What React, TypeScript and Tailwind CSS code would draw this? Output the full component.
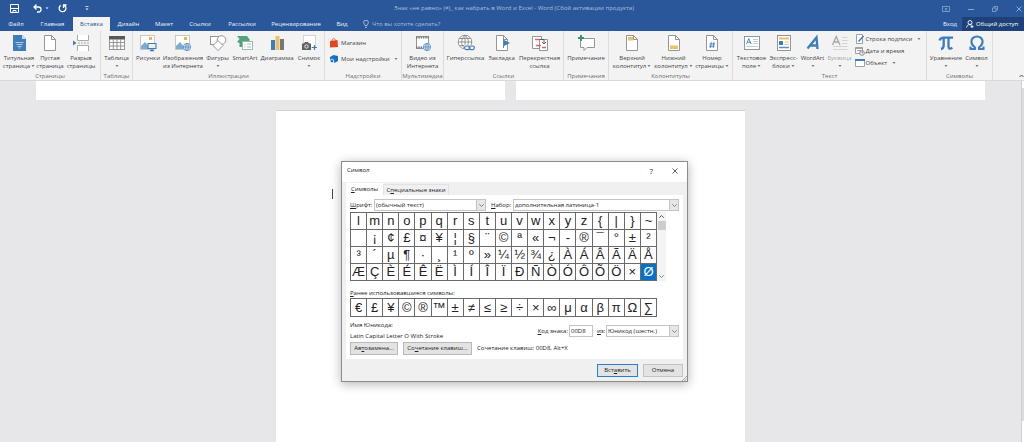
import React from "react";

const fontUi = "font-['Open_Sans','Noto_Sans',sans-serif]";

const tabs = [
  { label: "Файл", width: "w-[32px]" },
  { label: "Главная", width: "w-[41px]" },
  { label: "Вставка", width: "w-[37px]", active: true },
  { label: "Дизайн", width: "w-[37px]" },
  { label: "Макет", width: "w-[34px]" },
  { label: "Ссылки", width: "w-[38px]" },
  { label: "Рассылки", width: "w-[46px]" },
  { label: "Рецензирование", width: "w-[62px]" },
  { label: "Вид", width: "w-[30px]" },
];

const symbolRows = [
  ["l", "m", "n", "o", "p", "q", "r", "s", "t", "u", "v", "w", "x", "y", "z", "{", "|", "}", "~"],
  ["", "¡", "¢", "£", "¤", "¥", "¦", "§", "¨", "©", "ª", "«", "¬", "-", "®", "¯", "°", "±", "²"],
  ["³", "´", "µ", "¶", "·", "¸", "¹", "º", "»", "¼", "½", "¾", "¿", "À", "Á", "Â", "Ã", "Ä", "Å"],
  ["Æ", "Ç", "È", "É", "Ê", "Ë", "Ì", "Í", "Î", "Ï", "Ð", "Ñ", "Ò", "Ó", "Ô", "Õ", "Ö", "×", "Ø"],
];

const recentSymbols = ["€", "£", "¥", "©", "®", "™", "±", "≠", "≤", "≥", "÷", "×", "∞", "μ", "α", "β", "π", "Ω", "∑"];

function Icon({ children, small }: { children: React.ReactNode; small?: boolean }) {
  return (
    <svg
      className={small ? "size-[10px] shrink-0" : "size-[18px] shrink-0"}
      viewBox={small ? "0 0 10 10" : "0 0 18 18"}
      fill="none"
      stroke="#8a8a8a"
      strokeWidth={small ? 0.8 : 0.9}
      aria-hidden="true"
    >
      {children}
    </svg>
  );
}

const globe = (
  <g stroke="#5b8fc4" strokeWidth="0.8">
    <circle cx="13" cy="13" r="3.7" fill="#e9f1f9" />
    <path d="M9.3 13h7.4M13 9.3v7.4M13 9.3c-2.4 2-2.4 5.4 0 7.4M13 9.3c2.4 2 2.4 5.4 0 7.4" />
  </g>
);

const pageShape = <path d="M3.500 1.500H10.500L14.500 5.500V16.500H3.500ZM10.500 1.500V5.500H14.500" fill="#fff" />;

const photo = (
  <>
    <rect x="1.500" y="1.500" width="14" height="14" fill="#fff" stroke="#c2c2c2" />
    <rect x="10" y="3" width="3" height="3" fill="#efb54b" stroke="none" />
    <path d="M2 15v-3l4-4 6 7z" fill="#7fabd0" stroke="none" />
  </>
);

const icons = {
  cover: (
    <Icon>
      <path d="M3 1h9l4 4v12H3z" fill="#3f7db8" stroke="none" />
      <path d="M12 1v4h4z" fill="#c9dced" stroke="none" />
      <path d="M5.500 8.500h8M6.500 10.500h6M7.500 12.500h4M8.700 14h1.600" stroke="#b8d2ea" />
    </Icon>
  ),
  blank: <Icon>{pageShape}</Icon>,
  pageBreak: (
    <Icon>
      <path d="M5.500 1v5.500h11V1M5.500 17v-5.500h11V17" fill="#fff" stroke="#a0a0a0" />
      <path d="M6 9h12" strokeDasharray="2 1" stroke="#a0a0a0" />
      <path d="M1 6.500 4.500 9 1 11.500z" fill="#3f7db8" stroke="none" />
    </Icon>
  ),
  table: (
    <Icon>
      <rect x="1.500" y="2.500" width="15" height="13" fill="#fff" />
      <rect x="1" y="2" width="16" height="3.500" fill="#595959" stroke="none" />
      <path d="M1.500 8.500h15M1.500 12h15M5.300 5v10.500M9 5v10.500M12.700 5v10.500" />
    </Icon>
  ),
  picture: (
    <Icon>
      {photo}
      <path d="M9 9.500h8v5H9zM13 14.500v2M11 16.600h4" fill="#e9f1f9" stroke="#3f7db8" strokeWidth="1.100" />
    </Icon>
  ),
  onlinePicture: (
    <Icon>
      {photo}
      {globe}
    </Icon>
  ),
  shapes: (
    <Icon>
      <rect x="1.500" y="2.500" width="8" height="8" fill="#fff" />
      <circle cx="12.500" cy="6" r="4.300" fill="#fff" />
      <path d="M9 6.500 14 11.500 9 16.500 4 11.500z" fill="#fff" />
    </Icon>
  ),
  smartArt: (
    <Icon>
      <path d="M1 2h10l3 4-3 3H6v4H3.500V9L1 8l2.500-3z" fill="#54a27b" stroke="none" />
      <rect x="6.500" y="7.500" width="10" height="8" fill="#fff" stroke="#8fb7a3" />
      <path d="M8.500 10h1M11 10h4M8.500 13h1M11 13h4" stroke="#8fb7a3" />
    </Icon>
  ),
  chart: (
    <Icon>
      <path d="M3 6h4v10H3z" fill="#3f7db8" stroke="none" />
      <path d="M7.500 2h4v14h-4z" fill="#eac16b" stroke="none" />
      <path d="M12 5h4v11h-4z" fill="#777" stroke="none" />
    </Icon>
  ),
  screenshot: (
    <Icon>
      <rect x="3.500" y="1.500" width="12" height="12" fill="#fff" stroke="#d0d0d0" />
      <path d="M2 9.500h2l1-1.500h3l1 1.500h2V16H2z" fill="#606060" stroke="none" />
      <circle cx="6.500" cy="12.500" r="1.700" fill="#606060" stroke="#fff" />
      <path d="M14.500 11v5M12 13.500h5" stroke="#3f7db8" strokeWidth="1.200" />
    </Icon>
  ),
  video: (
    <Icon>
      <rect x="2.500" y="2.500" width="12" height="12" fill="#fff" />
      <path d="M2 3.500h13M2 13.500h10" stroke="#777" strokeWidth="2" strokeDasharray="1.500 0.800" />
      {globe}
    </Icon>
  ),
  hyperlink: (
    <Icon>
      <circle cx="8" cy="8" r="6.800" fill="#fff" />
      <path d="M1.200 8h13.600M2.500 4.500h11M2.500 11.500h11M8 1.200v13.600M8 1.200c-4.500 4-4.500 9.600 0 13.600M8 1.200c4.500 4 4.500 9.600 0 13.600" />
      <path d="M7 11h11v6H7z" fill="#f3f3f4" stroke="none" />
      <g stroke="#3f7db8" strokeWidth="1.200">
        <rect x="7.600" y="12" width="5.400" height="3.600" rx="1.800" />
        <rect x="12" y="12" width="5.400" height="3.600" rx="1.800" />
      </g>
    </Icon>
  ),
  bookmark: (
    <Icon>
      {pageShape}
      <path d="M10.500 5v9" stroke="#3f7db8" />
      <path d="M11 6l6 3-6 3z" fill="#3f7db8" stroke="none" />
    </Icon>
  ),
  crossRef: (
    <Icon>
      <path d="M1.500 2.500h9v12h-9z" fill="#fff" />
      <path d="M8.500 5.500h8v11h-8z" fill="#fff" />
      <path d="M4 5.500h5M5 11.500h5M11 13.500h4" stroke="#cf6a68" strokeWidth="1.500" />
      <path d="M9 5.500h4v4M11 8l2 2 2-2" stroke="#555" />
    </Icon>
  ),
  comment: (
    <Icon>
      <path d="M3.500 4.500h14v9H10L7 16.500v-3H3.500z" fill="#fff" />
      <path d="M4 1v6M1 4h6" stroke="#3f9270" strokeWidth="2" />
    </Icon>
  ),
  header: (
    <Icon>
      {pageShape}
      <path d="M5 3h5v3.500H5z" fill="#eac16b" stroke="none" />
    </Icon>
  ),
  footer: (
    <Icon>
      {pageShape}
      <path d="M5 11.500h8V15H5z" fill="#eac16b" stroke="none" />
    </Icon>
  ),
  pageNumber: (
    <Icon>
      {pageShape}
      <path d="M8.300 8 7.500 14M11 8l-.8 6M6.500 10h5.500M6 12.200h5.500" stroke="#3f7db8" />
    </Icon>
  ),
  textBox: (
    <Icon>
      <rect x="1.500" y="2.500" width="15" height="13" fill="#fff" />
      <path d="M3.500 10 5.800 4.500 8 10M4.300 8.300h3" stroke="#3f7db8" />
      <path d="M10 5.500h5M10 7.500h5M10 9.500h5M3.500 12.500h11.500" stroke="#b9c6d2" />
    </Icon>
  ),
  quickParts: (
    <Icon>
      <rect x="2.500" y="1.500" width="13" height="15" fill="#fff" />
      <path d="M4 4.500h10" stroke="#eac16b" strokeWidth="2" />
      <path d="M4 7h4v4H4z" fill="#3f7db8" stroke="none" />
      <path d="M9.500 8h4.500M9.500 10.500h4.500" stroke="#eac16b" />
      <path d="M4 13.500h10" stroke="#5b8fc4" strokeWidth="1.500" />
    </Icon>
  ),
  wordArt: (
    <Icon>
      <path d="M3.500 14.500 12.500 3.500 13.500 15M6.500 11.500h7" stroke="#3f7db8" strokeWidth="2.300" />
    </Icon>
  ),
  dropCap: (
    <Icon>
      <path d="M1.500 11 5.200 2.500 9 11M2.800 8h5" stroke="#a6a6a6" strokeWidth="1.300" />
      <path d="M11 3.500h5.500M11 6.500h5.500M11 9.500h5.500M2 12.500h14.500M2 15.500h14.500" stroke="#cfcfcf" />
    </Icon>
  ),
  equation: (
    <Icon>
      <path d="M2.500 6.500C3.500 3.500 5 3.700 7 3.700h9M6.700 4v7c0 3-1.200 3.800-2.700 4M11.500 4v8.500c0 2.300 2 2.700 3.800 1.200" stroke="#3f7db8" strokeWidth="2.300" />
    </Icon>
  ),
  omega: (
    <Icon>
      <path d="M2.500 12.500v2.500h4.500v-1.500C4 11.500 3.400 9.500 3.400 7.600 3.400 4.500 6 2.500 9 2.500s5.600 2 5.600 5.100c0 1.900-.6 3.900-3.600 5.900V15h4.500v-2.500" stroke="#3f7db8" strokeWidth="2.100" />
    </Icon>
  ),
};

function Caret({ className = "" }: { className?: string }) {
  return (
    <svg className={"inline-block h-[2px] w-[4px] shrink-0 " + className} viewBox="0 0 4 2" aria-hidden="true">
      <path d="M.5 0h3L2 2z" fill="#777" />
    </svg>
  );
}

type RibbonButtonProps = {
  icon: React.ReactNode;
  lines: string[];
  width: string;
  menu?: boolean;
  disabled?: boolean;
};

function RibbonButton({ icon, lines, width, menu, disabled }: RibbonButtonProps) {
  return (
    <button
      disabled={disabled}
      className={"flex shrink-0 flex-col items-center whitespace-nowrap leading-[8px] " + width + (disabled ? " text-[#a8a8a8]" : "")}
    >
      {icon}
      <span className="mt-[2px]">{lines[0]}</span>
      {lines[1] ? (
        <span className="flex items-center gap-px">
          {lines[1]}
          {menu && <Caret />}
        </span>
      ) : (
        menu && <Caret className="mt-[3px]" />
      )}
    </button>
  );
}

function Group({ title, width, children }: { title: string; width: string; children?: React.ReactNode }) {
  return (
    <section className={"flex shrink-0 flex-col border-r border-[#dcdcde] pt-[3px] " + width}>
      <div className="flex h-[38px] justify-center">{children}</div>
      <h2 className="text-center leading-[8px] text-[#6d6d6d]">{title}</h2>
    </section>
  );
}

function TitleBar() {
  return (
    <div className="flex h-[17px] items-center text-white">
      <div className="flex w-[130px] items-center pl-[10px]">
        <button aria-label="Сохранить">
          <svg className="size-[9px]" viewBox="0 0 9 9" fill="none" stroke="#fff">
            <path d="M.5.5h8v8h-8zM1 4.500h7M3 8.500v-2h3v2" />
          </svg>
        </button>
        <button aria-label="Отменить" className="ml-[14px]">
          <svg className="h-[9px] w-[16px]" viewBox="0 0 16 9" fill="none" stroke="#fff" strokeWidth="1.300">
            <path d="M3.500.5 1 3l2.500 2.500M1 3h4.500a2.500 2.500 0 0 1 0 5H4" />
            <path d="M12.500 3.500h3L14 5z" fill="#fff" stroke="none" />
          </svg>
        </button>
        <button aria-label="Повторить" className="ml-[9px]">
          <svg className="size-[9px]" viewBox="0 0 9 9" fill="none" stroke="#fff" strokeWidth="1.300">
            <path d="M6 1.200a3.400 3.400 0 1 1-3.300.2M5.500 4V1h3" />
          </svg>
        </button>
        <button aria-label="Настройка панели" className="ml-[18px]">
          <svg className="h-[5px] w-[4px]" viewBox="0 0 4 5" fill="#fff">
            <path d="M.5 0h3v.8h-3zM.5 2.500h3L2 4z" />
          </svg>
        </button>
      </div>
      <h1 className="flex-1 pr-[36px] text-center text-[6px] text-[#a9bfde]">
        Знак «не равно» (≠)_ как набрать в Word и Excel - Word (Сбой активации продукта)
      </h1>
      <div className="flex w-[90px] items-center justify-end gap-[18px] pr-[2px]">
        <button aria-label="Параметры ленты">
          <svg className="h-[6px] w-[8px]" viewBox="0 0 8 6" fill="none" stroke="#8ba8d1">
            <path d="M.5.5h7v5h-7zM4 5V2M2.700 3.300 4 2l1.300 1.300" strokeWidth="0.800" />
          </svg>
        </button>
        <button aria-label="Свернуть">
          <svg className="size-[6px]" viewBox="0 0 6 6" stroke="#8ba8d1">
            <path d="M0 3.500h6" />
          </svg>
        </button>
        <button aria-label="Восстановить">
          <svg className="size-[6px]" viewBox="0 0 6 6" fill="none" stroke="#8ba8d1" strokeWidth="0.800">
            <path d="M.5 2h3.500v3.500H.5zM2 2V.5h3.500V4H4" />
          </svg>
        </button>
        <button aria-label="Закрыть">
          <svg className="size-[6px]" viewBox="0 0 6 6" stroke="#8ba8d1">
            <path d="M.5.5l5 5M5.500.5l-5 5" />
          </svg>
        </button>
      </div>
    </div>
  );
}

function TabBar() {
  return (
    <div className="flex h-[14px] items-stretch text-[6px] text-[#f0f4fa]">
      <nav className="flex" aria-label="Вкладки ленты">
        {tabs.map((tab) => (
          <button
            key={tab.label}
            className={"text-center whitespace-nowrap " + tab.width + (tab.active ? " bg-[#f3f3f4] text-[#2b579a]" : "")}
          >
            {tab.label}
          </button>
        ))}
      </nav>
      <label className="ml-[6px] flex flex-1 items-center gap-[3px]">
        <svg className="h-[8px] w-[6px]" viewBox="0 0 6 8" fill="none" stroke="#c5d4ea" strokeWidth="0.800">
          <path d="M2 5.500C2 4.500.6 4 .6 2.600a2.400 2.400 0 0 1 4.800 0C5.400 4 4 4.500 4 5.500zM2 7.300h2" />
        </svg>
        <input className="w-[120px] bg-transparent placeholder:text-[#a9bfde]" placeholder="Что вы хотите сделать?" />
      </label>
      <button className="px-[5px]">Вход</button>
      <button className="flex w-[62px] items-center gap-[2px] bg-[#1e4179] pl-[4px] whitespace-nowrap text-white">
        <svg className="size-[8px]" viewBox="0 0 8 8" fill="none" stroke="#fff" strokeWidth="0.900">
          <circle cx="4" cy="2.500" r="2" />
          <path d="M.6 7.600C.8 5.500 2 4.600 4 4.600c1 0 1.600.3 2 .7M4.500 6.700h3M6 5.200v3" />
        </svg>
        Общий доступ
      </button>
    </div>
  );
}

function Ribbon() {
  return (
    <div className="flex h-[50px] border-b border-[#d8d8da] bg-[#f3f3f4] text-[6px] text-[#444]">
      <Group title="Страницы" width="w-[101px]">
        <RibbonButton icon={icons.cover} lines={["Титульная", "страница"]} width="w-[32px]" menu />
        <RibbonButton icon={icons.blank} lines={["Пустая", "страница"]} width="w-[30px]" />
        <RibbonButton icon={icons.pageBreak} lines={["Разрыв", "страницы"]} width="w-[32px]" />
      </Group>
      <Group title="Таблицы" width="w-[32px]">
        <RibbonButton icon={icons.table} lines={["Таблица"]} width="w-[30px]" menu />
      </Group>
      <Group title="Иллюстрации" width="w-[192px]">
        <RibbonButton icon={icons.picture} lines={["Рисунки"]} width="w-[28px]" />
        <RibbonButton icon={icons.onlinePicture} lines={["Изображения", "из Интернета"]} width="w-[42px]" />
        <RibbonButton icon={icons.shapes} lines={["Фигуры"]} width="w-[27px]" menu />
        <RibbonButton icon={icons.smartArt} lines={["SmartArt"]} width="w-[28px]" />
        <RibbonButton icon={icons.chart} lines={["Диаграмма"]} width="w-[36px]" />
        <RibbonButton icon={icons.screenshot} lines={["Снимок"]} width="w-[28px]" menu />
      </Group>
      <Group title="Надстройки" width="w-[77px]">
        <div className="flex flex-1 flex-col gap-[6px] pt-[4px] pl-[4px]">
          <button className="flex items-center gap-[2px]">
            <Icon small>
              <path d="M1 3l7.500-1 .5 7-8 .5z" fill="#e0461f" stroke="none" />
              <path d="M3 3c0-3 3.500-3 3.500-.5" stroke="#e0461f" />
            </Icon>
            Магазин
          </button>
          <button className="flex items-center gap-[2px] whitespace-nowrap">
            <Icon small>
              <path d="M1 3l3.500-2L9 2v5L5.500 9 4 6 1 7z" fill="#1673c4" stroke="none" />
              <circle cx="3" cy="7" r="1.800" fill="#1673c4" stroke="#f3f3f4" />
            </Icon>
            Мои надстройки
            <Caret className="ml-[2px]" />
          </button>
        </div>
      </Group>
      <Group title="Мультимедиа" width="w-[42px]">
        <RibbonButton icon={icons.video} lines={["Видео из", "Интернета"]} width="w-[40px]" />
      </Group>
      <Group title="Ссылки" width="w-[120px]">
        <RibbonButton icon={icons.hyperlink} lines={["Гиперссылка"]} width="w-[42px]" />
        <RibbonButton icon={icons.bookmark} lines={["Закладка"]} width="w-[30px]" />
        <RibbonButton icon={icons.crossRef} lines={["Перекрестная", "ссылка"]} width="w-[46px]" />
      </Group>
      <Group title="Примечания" width="w-[45px]">
        <RibbonButton icon={icons.comment} lines={["Примечание"]} width="w-[42px]" />
      </Group>
      <Group title="Колонтитулы" width="w-[124px]">
        <RibbonButton icon={icons.header} lines={["Верхний", "колонтитул"]} width="w-[42px]" menu />
        <RibbonButton icon={icons.footer} lines={["Нижний", "колонтитул"]} width="w-[41px]" menu />
        <RibbonButton icon={icons.pageNumber} lines={["Номер", "страницы"]} width="w-[36px]" menu />
      </Group>
      <Group title="Текст" width="w-[194px]">
        <RibbonButton icon={icons.textBox} lines={["Текстовое", "поле"]} width="w-[34px]" menu />
        <RibbonButton icon={icons.quickParts} lines={["Экспресс-", "блоки"]} width="w-[30px]" menu />
        <RibbonButton icon={icons.wordArt} lines={["WordArt"]} width="w-[28px]" menu />
        <RibbonButton icon={icons.dropCap} lines={["Буквица"]} width="w-[26px]" menu disabled />
        <div className="ml-[2px] flex w-[70px] flex-col gap-[2px] leading-[10px] whitespace-nowrap">
          <button className="flex items-center gap-px">
            <Icon small>
              <path d="M1.500.5h6v9h-6z" fill="#fff" />
              <path d="M3.500 7.500 8.500 2" stroke="#3f7db8" strokeWidth="1.500" />
            </Icon>
            Строка подписи
            <Caret className="ml-[4px]" />
          </button>
          <button className="flex items-center gap-px">
            <Icon small>
              <path d="M.5 1.500h7v6h-7z" fill="#fff" />
              <path d="M.5 2.500h7M2 4.500h4" />
              <circle cx="7" cy="7" r="2.300" fill="#fff" stroke="#666" />
              <path d="M7 5.500V7h1" stroke="#666" />
            </Icon>
            Дата и время
          </button>
          <button className="flex items-center gap-px">
            <Icon small>
              <path d="M.5 1.500h9v7h-9z" fill="#fff" />
              <path d="M0 2h10" stroke="#3f7db8" strokeWidth="2" />
            </Icon>
            Объект
            <Caret className="ml-[4px]" />
          </button>
        </div>
      </Group>
      <Group title="Символы" width="w-[66px]">
        <RibbonButton icon={icons.equation} lines={["Уравнение"]} width="w-[34px]" menu />
        <RibbonButton icon={icons.omega} lines={["Символ"]} width="w-[27px]" menu />
      </Group>
      <button aria-label="Свернуть ленту" className="ml-auto flex items-end pb-[2px]">
        <svg className="h-[4px] w-[5px]" viewBox="0 0 5 4" fill="none" stroke="#555">
          <path d="M.5 3 2.500 1l2 2" />
        </svg>
      </button>
    </div>
  );
}

function Chevron() {
  return (
    <svg className="h-[3px] w-[5px]" viewBox="0 0 5 3" fill="none" stroke="#777" strokeWidth="0.900" aria-hidden="true">
      <path d="M.3.3l2.200 2.200L4.700.3" />
    </svg>
  );
}

function DropDown({ id, value, width }: { id: string; value: string; width: string }) {
  return (
    <div className={"relative h-[12px] border border-[#c4c4c4] bg-white " + width}>
      <select id={id} defaultValue={value} className="block h-full w-full appearance-none bg-transparent pl-px">
        <option>{value}</option>
      </select>
      <span className="pointer-events-none absolute inset-y-0 right-0 flex w-[9px] items-center justify-center border-l border-[#c4c4c4] bg-[#e6e6e6]">
        <Chevron />
      </span>
    </div>
  );
}

type SymbolGridProps = {
  symbols: string[];
  selected?: string;
  rowHeight: string;
};

function SymbolGrid({ symbols, selected, rowHeight }: SymbolGridProps) {
  return (
    <div className="grid w-[307px] grid-cols-19 border-t border-l border-[#6a6a6a]">
      {symbols.map((symbol, i) => (
        <button
          key={i}
          aria-label={symbol || "Пробел"}
          className={
            "border-r border-b border-[#6a6a6a] text-center font-['Liberation_Sans','DejaVu_Sans',sans-serif] text-[13px] leading-[16px] " +
            rowHeight +
            (symbol === selected ? " bg-[#0a70c4] text-white" : "")
          }
        >
          {symbol}
        </button>
      ))}
    </div>
  );
}

const dialogButton = "h-[13px] border bg-[#e3e3e3] text-center whitespace-nowrap";

function SymbolDialog() {
  return (
    <div
      role="dialog"
      aria-label="Символ"
      className="absolute top-[80px] right-0 left-[5px] mx-auto w-[347px] border border-[#8c8c8c] bg-[#f0f0f1] text-[6px] text-[#222] shadow-[0_2px_10px_rgba(0,0,0,0.3)]"
    >
      <div className="flex h-[20px] items-start bg-white pt-[4px] pr-[9px] pl-[5px] leading-[9px]">
        <h2 className="flex-1">Символ</h2>
        <button aria-label="Справка" className="text-[8px]">
          ?
        </button>
        <button aria-label="Закрыть окно" className="ml-[19px] flex h-[9px] items-center">
          <svg className="size-[6px]" viewBox="0 0 6 6" stroke="#333" strokeWidth="0.800">
            <path d="M.5.5l5 5M5.500.5l-5 5" />
          </svg>
        </button>
      </div>
      <div className="flex items-end px-[4px] pt-px" role="tablist">
        <button role="tab" aria-selected="true" className="h-[12px] w-[37px] bg-white">
          <u>С</u>имволы
        </button>
        <button role="tab" aria-selected="false" className="h-[11px] w-[66px] border border-b-0 border-[#e2e2e2] whitespace-nowrap">
          С<u>п</u>ециальные знаки
        </button>
      </div>
      <div className="mx-[4px] bg-white px-[4px] pt-[4px] pb-[4px]">
        <div className="flex items-center">
          <label htmlFor="font" className="w-[24px]">
            <u>Ш</u>рифт:
          </label>
          <DropDown id="font" value="(обычный текст)" width="w-[112px]" />
          <label htmlFor="subset" className="ml-[5px] w-[22px]">
            <u>Н</u>абор:
          </label>
          <DropDown id="subset" value="дополнительная латиница-1" width="flex-1" />
        </div>
        <div className="mt-px flex">
          <SymbolGrid symbols={symbolRows.flat()} selected="Ø" rowHeight="h-[17px]" />
          <div className="flex w-[9px] flex-col items-center justify-between bg-[#f4f4f4] py-[3px]">
            <div className="flex flex-1 flex-col items-center gap-[3px]">
              <svg className="h-[3px] w-[5px]" viewBox="0 0 5 3" fill="none" stroke="#555">
                <path d="M.3 2.700 2.500.5l2.200 2.200" />
              </svg>
              <span className="h-[9px] w-[8px] bg-[#cdcdcd]" />
            </div>
            <Chevron />
          </div>
        </div>
        <p className="mt-[8px] leading-[8px]">
          <u>Р</u>анее использовавшиеся символы:
        </p>
        <div className="mt-px">
          <SymbolGrid symbols={recentSymbols} rowHeight="h-[18px]" />
        </div>
        <div className="mt-[3px] flex items-start">
          <div className="flex-1 leading-[11px]">
            <p>Имя Юникода:</p>
            <p>Latin Capital Letter O With Stroke</p>
          </div>
          <div className="mt-[5px] flex items-center">
            <label htmlFor="code">
              <u>К</u>од знака:
            </label>
            <input id="code" defaultValue="00D8" className="ml-px h-[12px] w-[24px] border border-[#c4c4c4] bg-white pl-px" />
            <label htmlFor="base" className="ml-[4px] w-[9px]">
              <u>и</u>з:
            </label>
            <DropDown id="base" value="Юникод (шестн.)" width="w-[73px]" />
          </div>
        </div>
        <div className="flex items-center">
          <button className={dialogButton + " w-[48px] border-[#b8b8b8]"}>
            Ав<u>т</u>озамена...
          </button>
          <button className={dialogButton + " ml-[5px] w-[69px] border-[#b8b8b8]"}>
            Со<u>ч</u>етание клавиш...
          </button>
          <p className="ml-[5px]">Сочетание клавиш: 00D8, Alt+X</p>
        </div>
      </div>
      <div className="flex justify-end gap-[5px] px-[4px] pt-[5px] pb-[4px]">
        <button className={dialogButton + " w-[41px] border-[#2a7fc9]"}>
          Вст<u>а</u>вить
        </button>
        <button className={dialogButton + " w-[40px] border-[#c2c2c2]"}>Отмена</button>
      </div>
      <svg className="absolute right-0 bottom-0 size-[5px]" viewBox="0 0 5 5" stroke="#8c8c8c" strokeWidth="0.800" aria-hidden="true">
        <path d="M0 5 5 0M2.500 5 5 2.500" />
      </svg>
    </div>
  );
}

export default function App() {
  return (
    <div className={"flex h-screen flex-col overflow-hidden bg-[#e7e6e8] " + fontUi}>
      <header className="bg-[#2a579a]">
        <TitleBar />
        <TabBar />
      </header>
      <Ribbon />
      <main className="relative flex flex-1">
        <div className="flex flex-1 flex-col">
          <div className="flex justify-center gap-[11px]">
            <div className="h-[19px] w-[469px] bg-white" />
            <div className="h-[19px] w-[469px] bg-white" />
          </div>
          <div className="mx-auto mt-[10px] w-[469px] flex-1 border-t border-[#d4d4d6] bg-white pt-[78px] pl-[56px]">
            <div className="h-[10px] w-px bg-[#444]" />
          </div>
        </div>
        <div className="flex w-[3px] flex-col border-l border-[#d0cfd2] bg-[#dbdadd]">
          <span className="h-[7px] bg-white" />
          <span className="mt-auto h-[21px] bg-white" />
        </div>
        <SymbolDialog />
      </main>
    </div>
  );
}
